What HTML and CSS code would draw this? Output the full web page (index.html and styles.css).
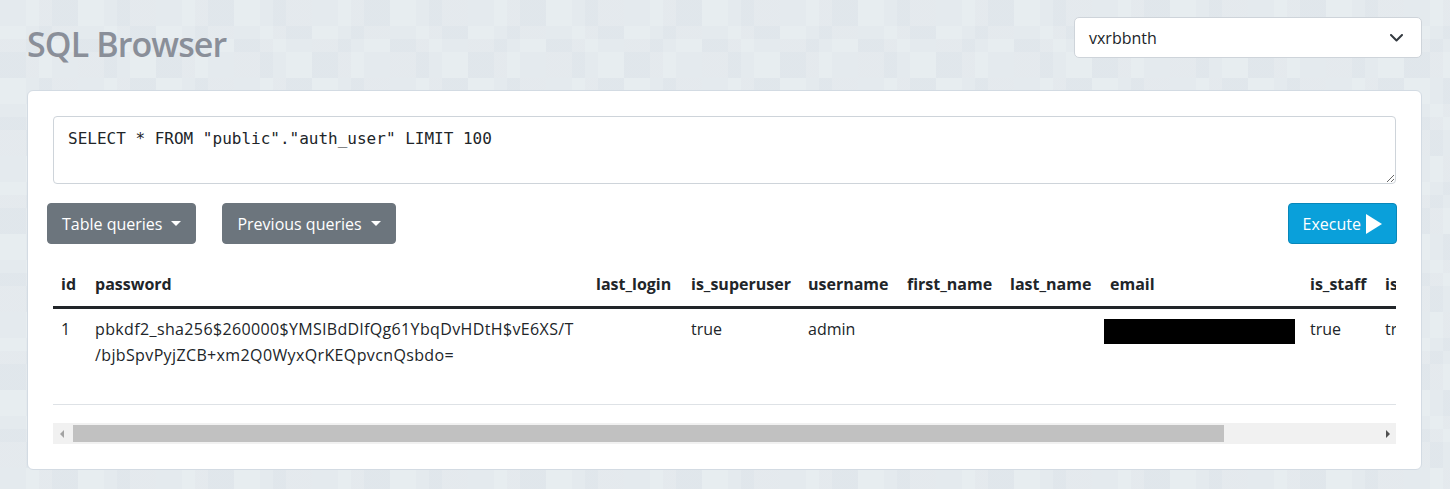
FILE: index.html
```html
<!DOCTYPE html>
<html lang="en">
<head>
<meta charset="utf-8">
<title>SQL Browser</title>
<link rel="stylesheet" href="styles.css">
</head>
<body>
<div class="page">
  <header class="topbar">
    <h1 class="title">SQL Browser</h1>
    <div class="db-select">
      <span>vxrbbnth</span>
      <svg class="chevron" width="13" height="8" viewBox="0 0 13 8"><polyline points="1,1 6.5,6.5 12,1" fill="none" stroke="#343a40" stroke-width="2" stroke-linecap="round" stroke-linejoin="round"/></svg>
    </div>
  </header>
  <main class="card">
    <textarea class="query" spellcheck="false">SELECT * FROM "public"."auth_user" LIMIT 100</textarea>
    <div class="toolbar">
      <div class="toolbar-left">
        <button class="btn btn-gray">Table queries<span class="caret"></span></button>
        <button class="btn btn-gray">Previous queries<span class="caret"></span></button>
      </div>
      <button class="btn btn-exec">Execute<svg class="play" width="16" height="20" viewBox="0 0 16 20"><polygon points="0,0 16,10 0,20" fill="#fff"/></svg></button>
    </div>
    <div class="results">
      <div class="table-viewport">
        <table class="data">
          <colgroup>
            <col class="c-id"><col class="c-password"><col class="c-last-login"><col class="c-superuser"><col class="c-username"><col class="c-first"><col class="c-last"><col class="c-email"><col class="c-staff"><col class="c-active"><col class="c-joined">
          </colgroup>
          <thead>
            <tr>
              <th>id</th><th>password</th><th>last_login</th><th>is_superuser</th><th>username</th><th>first_name</th><th>last_name</th><th>email</th><th>is_staff</th><th>is_active</th><th>date_joined</th>
            </tr>
          </thead>
          <tbody>
            <tr>
              <td>1</td>
              <td class="pw">pbkdf2_sha256$260000$YMSlBdDlfQg61YbqDvHDtH$vE6XS/T/bjbSpvPyjZCB+xm2Q0WyxQrKEQpvcnQsbdo=</td>
              <td></td>
              <td>true</td>
              <td>admin</td>
              <td></td>
              <td></td>
              <td><span class="redacted"></span></td>
              <td>true</td>
              <td>true</td>
              <td>2023-01-01 12:00:00</td>
            </tr>
          </tbody>
        </table>
      </div>
      <div class="hscroll">
        <div class="hscroll-btn"><span class="arrow-left"></span></div>
        <div class="hscroll-track"><div class="hscroll-thumb"></div></div>
        <div class="hscroll-btn"><span class="arrow-right"></span></div>
      </div>
    </div>
  </main>
</div>
</body>
</html>
```

FILE: styles.css
```css
html, body {
  margin: 0;
  height: 100%;
}

body {
  font-family: "Open Sans", "Noto Sans", sans-serif;
  color: #212529;
  background-color: #e4eaee;
  background-image:
    conic-gradient(rgba(255,255,255,0.12) 25%, transparent 0 50%, rgba(255,255,255,0.12) 0 75%, transparent 0),
    conic-gradient(rgba(190,202,212,0.10) 25%, transparent 0 50%, rgba(190,202,212,0.10) 0 75%, transparent 0);
  background-size: 52px 52px, 78px 78px;
}

.page {
  padding: 0 28px 20px 27px;
}

.topbar {
  display: flex;
  justify-content: space-between;
  align-items: flex-start;
  height: 90px;
}

.title {
  margin: 24px 0 0;
  font-size: 34px;
  line-height: 40px;
  font-weight: 600;
  letter-spacing: -0.9px;
  color: #8a8f99;
}

.db-select {
  margin-top: 17px;
  width: 348px;
  height: 41px;
  box-sizing: border-box;
  border: 1px solid #ced4da;
  border-radius: 5px;
  background: #fff;
  display: flex;
  align-items: center;
  justify-content: space-between;
  padding: 0 18px 0 14px;
  font-size: 16px;
  color: #212529;
}

.chevron {
  display: block;
}

.card {
  display: block;
  background: #fff;
  border: 1px solid #d3dbe3;
  border-radius: 6px;
  padding: 25px;
}

.query {
  display: block;
  width: 100%;
  box-sizing: border-box;
  height: 68px;
  margin: 0;
  border: 1px solid #ced4da;
  border-radius: 4px;
  padding: 12px 14px;
  font-family: "DejaVu Sans Mono", monospace;
  font-size: 16px;
  line-height: 20px;
  color: #212529;
  resize: vertical;
  outline: none;
}

.toolbar {
  display: flex;
  justify-content: space-between;
  margin: 19px -1px 0 -6px;
}

.toolbar-left {
  display: flex;
  gap: 26px;
}

.btn {
  display: inline-flex;
  align-items: center;
  height: 41px;
  box-sizing: border-box;
  padding: 0 14px;
  border-radius: 4px;
  border: 1px solid transparent;
  font-family: inherit;
  font-size: 16px;
  line-height: 24px;
  color: #fff;
  cursor: pointer;
}

.btn-gray {
  background: #6c757d;
  border-color: #6c757d;
}

.btn-exec {
  background: #0aa0da;
  border-color: #0787ba;
}

.caret {
  display: inline-block;
  margin-left: 9px;
  width: 0;
  height: 0;
  border-top: 5px solid #fff;
  border-left: 5px solid transparent;
  border-right: 5px solid transparent;
}

.play {
  display: block;
  margin-left: 5px;
}

.results {
  margin-top: 21px;
}

.table-viewport {
  overflow: hidden;
}

.data {
  border-collapse: collapse;
  table-layout: fixed;
  width: 1531px;
}

.c-id { width: 34px; }
.c-password { width: 501px; }
.c-last-login { width: 95px; }
.c-superuser { width: 117px; }
.c-username { width: 99px; }
.c-first { width: 103px; }
.c-last { width: 100px; }
.c-email { width: 200px; }
.c-staff { width: 75px; }
.c-active { width: 90px; }
.c-joined { width: 117px; }

.data th,
.data td {
  text-align: left;
  vertical-align: top;
  font-size: 16px;
}

.data th {
  padding: 7px 8px 10px;
  line-height: 24px;
  font-weight: 700;
  white-space: nowrap;
  overflow: hidden;
  border-bottom: 3px solid #212529;
}

.data td {
  padding: 7px 8px 36px;
  line-height: 26px;
  border-bottom: 1px solid #dee2e6;
  white-space: nowrap;
  overflow: hidden;
}

.data td.pw {
  white-space: normal;
  overflow-wrap: anywhere;
  letter-spacing: 0.37px;
}

.redacted {
  display: block;
  width: 191px;
  height: 25px;
  margin: 3px 0 0 -6px;
  background: #000;
}

.hscroll {
  display: flex;
  height: 21px;
  margin-top: 18px;
  background: #f1f1f1;
}

.hscroll-btn {
  width: 17px;
  display: flex;
  align-items: center;
  justify-content: center;
}

.hscroll-track {
  flex: 1;
  padding: 2px 0;
  box-sizing: border-box;
}

.hscroll-thumb {
  width: 1151px;
  height: 17px;
  margin-left: 3px;
  background: #c1c1c1;
}

.arrow-left {
  width: 0;
  height: 0;
  border-right: 4px solid #a3a3a3;
  border-top: 4px solid transparent;
  border-bottom: 4px solid transparent;
}

.arrow-right {
  width: 0;
  height: 0;
  border-left: 4px solid #505050;
  border-top: 4px solid transparent;
  border-bottom: 4px solid transparent;
}
```
